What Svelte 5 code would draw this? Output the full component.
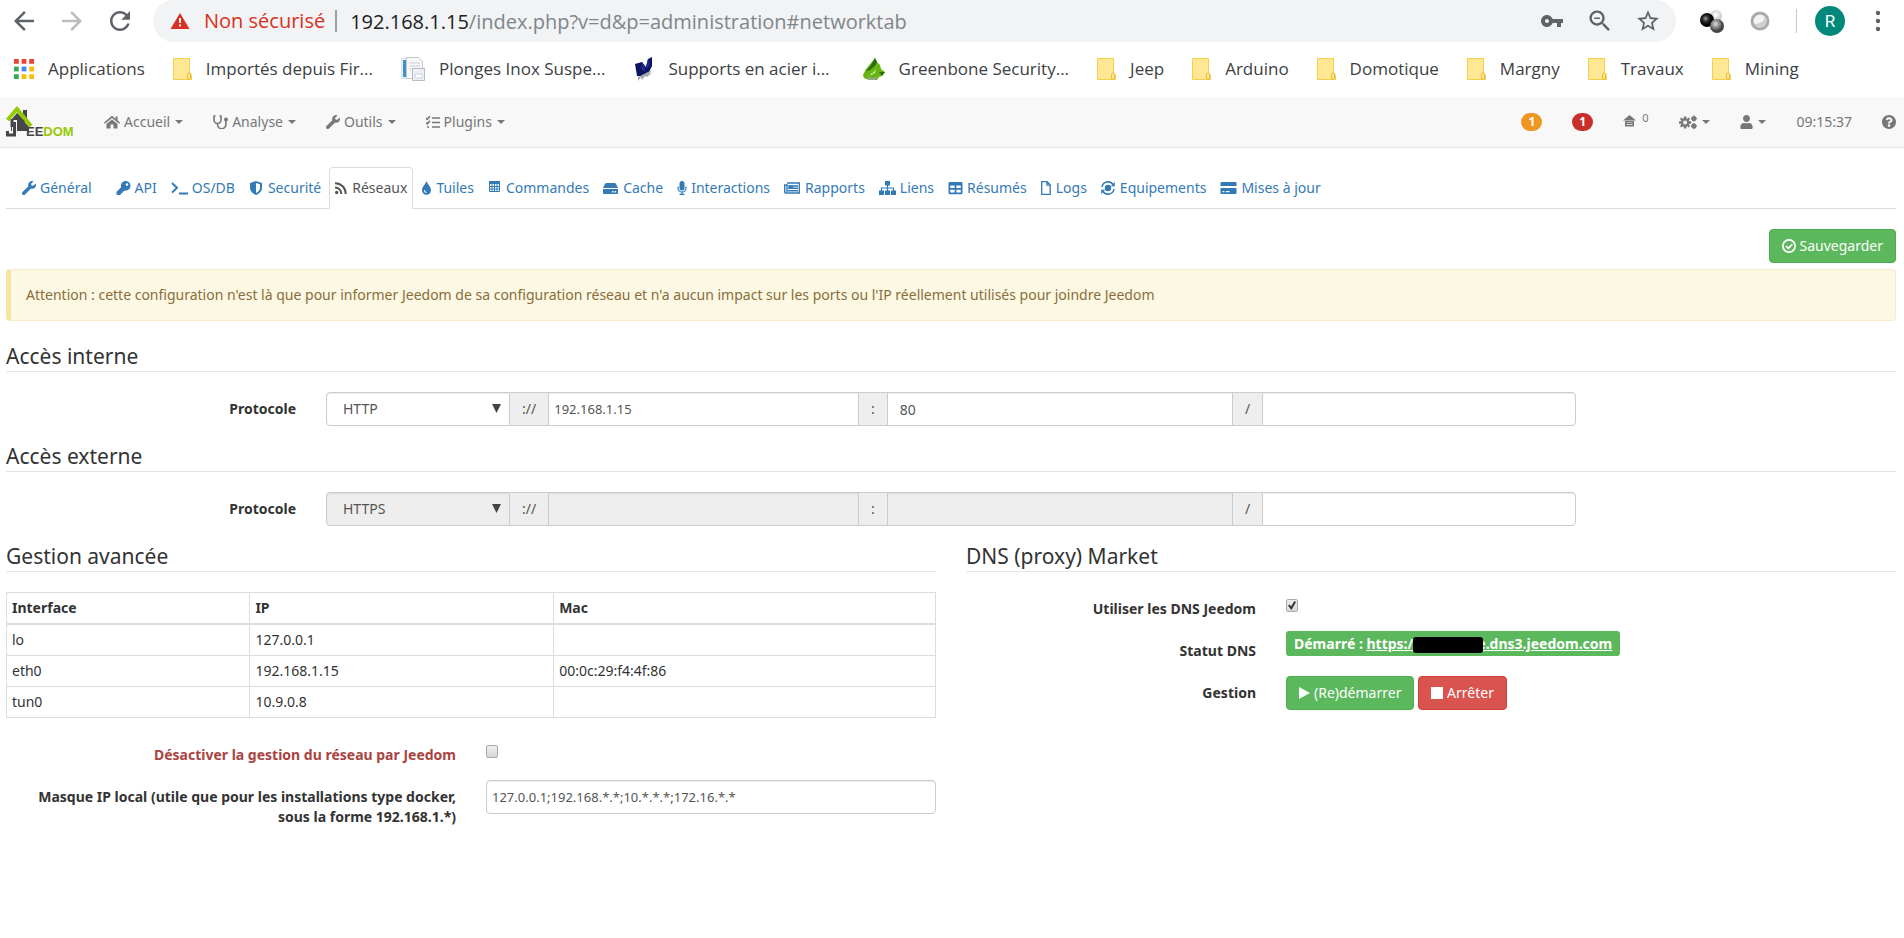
<script lang="ts">
  type Icon = { w: number; h?: number; box?: string; fill?: string; line?: string; sw?: number };

  const icons: Record<string, Icon> = {
    wrench: {
      w: 14,
      box: "0 0 512 512",
      fill: "M507.73 109.1c-2.24-9.03-13.54-12.09-20.12-5.51l-74.36 74.36-67.88-11.31-11.31-67.88 74.36-74.36c6.62-6.62 3.43-17.9-5.66-20.16-47.38-11.74-99.55.91-136.58 37.93-39.64 39.64-50.55 97.1-34.05 147.2L18.74 402.76c-24.99 24.99-24.99 65.51 0 90.5 24.99 24.99 65.51 24.99 90.5 0l213.21-213.21c50.12 16.71 107.47 5.68 147.37-34.22 37.07-37.07 49.7-89.32 37.91-136.73z"
    },
    key: {
      w: 15,
      box: "0 0 512 512",
      fill: "M512 176c0 97.2-78.8 176-176 176-11.2 0-22.2-1.1-32.8-3.1l-24 27A24 24 0 0 1 261.200 384H224v40c0 13.300-10.700 24-24 24h-40v40c0 13.300-10.700 24-24 24H24c-13.300 0-24-10.700-24-24v-78c0-6.400 2.500-12.500 7-17l161.800-161.800C163.100 213.800 160 195.300 160 176 160 78.800 238.800 0 336 0c97.500 0 176 78.500 176 176zM336 128c0 26.500 21.500 48 48 48s48-21.500 48-48-21.500-48-48-48-48 21.500-48 48z"
    },
    terminal: { w: 17, line: "M1 2l5 4.800L1 11.600M8 12.500h9", sw: 2 },
    shield: { w: 15, fill: "M7 0l6 2v5c0 3-2.500 5.500-6 7-3.500-1.500-6-4-6-7V2zM7 2v10c2.500-1.200 4-3 4-5V3.300z" },
    rss: { w: 13, fill: "M0 11.500a1.700 1.700 0 1 1 3.400 0 1.700 1.700 0 1 1-3.400 0z", line: "M0 2.200a10.500 10.500 0 0 1 10.700 10.800M0 6.400a6.300 6.300 0 0 1 6.300 6.600", sw: 2 },
    tint: { w: 11, fill: "M5.500 0c1 3 4.500 6 4.500 9.200a4.500 4.500 0 0 1-9 0C1 6 4.500 3 5.500 0zM3 9c0 1.800 1 2.900 2.500 3v-.900C4.500 11 4 10 4 9z" },
    calendar: { w: 14, fill: "M1 0h11v3H1z", line: "M1.500 3v7.500h10V3M1 5.500h11M1 8h11M4 3v7.500M6.500 3v7.500M9 3v7.500", sw: 1 },
    hdd: { w: 16, fill: "M3.500 2h8q1 0 1.500 1l2 4H0l2-4q.500-1 1.500-1zM0 8h15v4q0 1-1 1H1q-1 0-1-1zM9 10v1.400h1.500V10zM11.600 10v1.400h1.500V10z" },
    mic: { w: 10, fill: "M5 0a2.500 2.500 0 0 1 2.500 2.500V7a2.500 2.500 0 0 1-5 0V2.500A2.500 2.500 0 0 1 5 0z", line: "M1 5.500V7a4 4 0 0 0 8 0V5.500M5 11v2.500M2.500 13.400h5", sw: 1.200 },
    news: { w: 17, fill: "M5 4.500h4v3.500H5z", line: "M3 2h12.300v10H2Q.700 12 .700 10.700V4H3v7M4 5h10M4 7.300h10M4 9.800h10", sw: 1.400 },
    sitemap: { w: 17, fill: "M6 0h5v4.500H6zM0 9.500h5V14H0zM6 9.500h5V14H6zM12 9.500h5V14h-5z", line: "M8.500 4v6M2.500 10V7h12v3", sw: 1.200 },
    table: { w: 15, box: "0 0 512 512", fill: "M464 32H48C21.500 32 0 53.500 0 80v352c0 26.500 21.500 48 48 48h416c26.500 0 48-21.500 48-48V80c0-26.500-21.500-48-48-48zM224 416H64v-96h160v96zm0-160H64v-96h160v96zm224 160H288v-96h160v96zm0-160H288v-96h160v96z" },
    file: { w: 11, line: "M.700.700h5.500l3 3.200v9.400H.700zM6 .700v3.500h3.300", sw: 1.300 },
    sync: { w: 15, fill: "M3.800 7a3.200 3.200 0 1 1 6.400 0 3.200 3.200 0 1 1-6.400 0zM13.800 1v4.200H9.800zM.200 13V8.800h4z", line: "M1 6a6 6 0 0 1 11-2.300M13 8a6 6 0 0 1-11 2.300", sw: 1.500 },
    card: { w: 17, fill: "M1.500 1h14q1 0 1 1v3h-16V2q0-1 1-1zM.500 7h16v5q0 1-1 1h-14q-1 0-1-1zM2.500 10v1.300h2V10zM6 10v1.300h3.500V10z" },
    home: { w: 16, fill: "M8 .800L0 7.600l1 1.200 7-5.900 7 5.900 1-1.200-2.400-2V1.500h-2V4zM8 4.400L2.500 9v4.500h4v-4h3v4h4V9z" },
    steth: { w: 15, fill: "M11 4.500a2 2 0 1 1 4 0 2 2 0 1 1-4 0z", line: "M2.500 1H1v4a3.500 3.500 0 0 0 7 0V1H6.500M4.500 8.500v1a4.200 4.200 0 0 0 8.400 0V6", sw: 1.600 },
    tasks: { w: 14, line: "M0 3l1.300 1.300L4 1.300M0 7.500l1.300 1.300L4 5.900M1 12h2M6 3h8M6 7.500h8M6 12h8", sw: 1.600 },
    gears: { w: 18, line: "M9.300 7.500a3.200 3.200 0 1 1-6.400 0 3.200 3.200 0 1 1 6.400 0M16.300 3.500a1.400 1.400 0 1 1-2.800 0 1.400 1.400 0 1 1 2.800 0M16.300 11a1.400 1.400 0 1 1-2.800 0 1.400 1.400 0 1 1 2.800 0", fill: "M4.800 1.500h2.600v2.500H4.800zM4.800 11h2.600v2.500H4.800zM0 6.200h2.500v2.600H0zM9.700 6.200h2.500v2.600H9.700zM.900 4l1.600-1.600 2 2-1.600 1.600zM9.600 2.400L11.200 4l-2 2-1.600-1.600zM.900 11l2-2 1.600 1.600-2 2zM9.200 9l2 2-1.600 1.600-2-2zM14.300.500h1.200v1h-1.200zM14.300 5.500h1.200v1h-1.200zM12 3h1v1.200h-1zM17 3h1v1.200h-1zM14.300 8h1.200v1h-1.200zM14.300 13h1.200v1h-1.200zM12 10.400h1v1.200h-1zM17 10.400h1v1.200h-1z", sw: 2.300 },
    house: { w: 13, fill: "M6.500 0L13 5.500H0zM2 6h9v5.500H2zM3.500 7.500v.600h6v-.600zM3.500 9.300v.600h6v-.600z" },
    user: { w: 13, box: "0 0 448 512", fill: "M224 256c70.700 0 128-57.300 128-128S294.700 0 224 0 96 57.300 96 128s57.300 128 128 128zm89.600 32h-16.700c-22.200 10.200-46.900 16-72.900 16s-50.600-5.800-72.900-16h-16.700C60.200 288 0 348.200 0 422.400V464c0 26.500 21.500 48 48 48h352c26.500 0 48-21.500 48-48v-41.600c0-74.200-60.200-134.400-134.400-134.400z" },
    help: { w: 14, box: "8 8 496 496", fill: "M504 256c0 137-111 248-248 248S8 393 8 256C8 119.100 119 8 256 8s248 111.100 248 248zM262.700 90c-54.500 0-89.300 23-116.500 63.800-3.600 5.200-2.400 12.400 2.600 16.200l34.700 26.300c5.200 4 12.700 3 16.700-2.100 17.900-22.700 30.100-35.800 57.300-35.800 20.400 0 45.700 13.100 45.700 33 0 14.900-12.400 22.600-32.500 33.900C247.100 238.500 216 254.900 216 296v4c0 6.600 5.400 12 12 12h56c6.600 0 12-5.400 12-12v-1.300c0-28.500 83.200-29.700 83.200-106.700 0-58-60.200-102-116.500-102zM256 338a46 46 0 1 0 0 92 46 46 0 0 0 0-92z" },
    check: { w: 14, line: "M13.100 7A6.100 6.100 0 1 1 .900 7a6.100 6.100 0 1 1 12.200 0M4 7l2.300 2.400L10.300 5.300", sw: 1.800 },
    play: { w: 11, fill: "M0 1l11 6-11 6z" },
    stop: { w: 12, fill: "M0 1h12v12H0z" },
    back: { w: 30, h: 30, box: "0 0 24 24", fill: "M20 11H7.830l5.590-5.590L12 4l-8 8 8 8 1.410-1.410L7.830 13H20v-2z" },
    forward: { w: 30, h: 30, box: "0 0 24 24", fill: "M4 13h12.170l-5.590 5.590L12 20l8-8-8-8-1.410 1.410L16.170 11H4v2z" },
    reload: { w: 30, h: 30, box: "0 0 24 24", fill: "M17.650 6.350C16.200 4.900 14.210 4 12 4c-4.420 0-7.990 3.580-7.990 8s3.570 8 7.990 8c3.730 0 6.840-2.550 7.730-6h-2.080c-.82 2.330-3.040 4-5.650 4-3.310 0-6-2.690-6-6s2.690-6 6-6c1.660 0 3.140.69 4.220 1.780L13 11h7V4l-2.350 2.350z" },
    warn: { w: 20, h: 18, box: "0 0 20 18", fill: "M10 1l9.500 16H.500zM9 6v5h2V6zM9 12.500v2h2v-2z" },
    vpn: { w: 24, h: 24, box: "0 0 24 24", fill: "M12.650 10C11.830 7.670 9.610 6 7 6c-3.310 0-6 2.690-6 6s2.690 6 6 6c2.610 0 4.830-1.670 5.650-4H17v4h4v-4h2v-4H12.650zM7 14c-1.100 0-2-.9-2-2s.9-2 2-2 2 .9 2 2-.9 2-2 2z" },
    zoom: { w: 28, h: 28, box: "0 0 24 24", fill: "M15.500 14h-.79l-.28-.27C15.410 12.590 16 11.110 16 9.500 16 5.910 13.090 3 9.500 3S3 5.910 3 9.500 5.910 16 9.500 16c1.610 0 3.090-.59 4.230-1.570l.27.28v.79l5 4.990L20.490 19l-4.990-5zm-6 0C7.010 14 5 11.990 5 9.500S7.010 5 9.500 5 14 7.010 14 9.500 11.990 14 9.500 14zM7 9h5v1.300H7z" },
    star: { w: 26, h: 26, box: "0 0 24 24", fill: "M22 9.240l-7.190-.62L12 2 9.190 8.630 2 9.240l5.460 4.730L5.820 21 12 17.270 18.180 21l-1.630-7.030L22 9.240zM12 15.400l-3.760 2.270 1-4.280-3.320-2.880 4.380-.38L12 6.100l1.710 4.040 4.380.38-3.320 2.880 1 4.280L12 15.400z" },
    dots: { w: 6, h: 22, box: "0 0 6 22", fill: "M.800 3a2.200 2.200 0 1 1 4.400 0 2.200 2.200 0 1 1-4.400 0zM.800 11a2.200 2.200 0 1 1 4.400 0 2.200 2.200 0 1 1-4.400 0zM.800 19a2.200 2.200 0 1 1 4.400 0 2.200 2.200 0 1 1-4.400 0z" }
  };

  const bookmarks = [
    { icon: "apps", text: "Applications" },
    { icon: "folder", text: "Importés depuis Fir..." },
    { icon: "doc", text: "Plonges Inox Suspe..." },
    { icon: "steel", text: "Supports en acier i..." },
    { icon: "dragon", text: "Greenbone Security..." },
    { icon: "folder", text: "Jeep" },
    { icon: "folder", text: "Arduino" },
    { icon: "folder", text: "Domotique" },
    { icon: "folder", text: "Margny" },
    { icon: "folder", text: "Travaux" },
    { icon: "folder", text: "Mining" }
  ];

  const appColors = ["#ea4335", "#ea4335", "#ea4335", "#34a853", "#4285f4", "#fbbc05", "#34a853", "#fbbc05", "#fbbc05"];

  const menus = [
    { icon: "home", text: "Accueil" },
    { icon: "steth", text: "Analyse" },
    { icon: "wrench", text: "Outils" },
    { icon: "tasks", text: "Plugins" }
  ];

  const tabs = [
    { id: "general", icon: "wrench", text: "Général" },
    { id: "api", icon: "key", text: "API" },
    { id: "os", icon: "terminal", text: "OS/DB" },
    { id: "security", icon: "shield", text: "Securité" },
    { id: "network", icon: "rss", text: "Réseaux" },
    { id: "tiles", icon: "tint", text: "Tuiles" },
    { id: "commands", icon: "calendar", text: "Commandes" },
    { id: "cache", icon: "hdd", text: "Cache" },
    { id: "interact", icon: "mic", text: "Interactions" },
    { id: "report", icon: "news", text: "Rapports" },
    { id: "graph", icon: "sitemap", text: "Liens" },
    { id: "summary", icon: "table", text: "Résumés" },
    { id: "log", icon: "file", text: "Logs" },
    { id: "equipment", icon: "sync", text: "Equipements" },
    { id: "update", icon: "card", text: "Mises à jour" }
  ];

  let activeTab = $state("network");

  const access = $state([
    { id: "internal", title: "Accès interne", protocol: "HTTP", host: "192.168.1.15", port: "80", path: "", locked: false },
    { id: "external", title: "Accès externe", protocol: "HTTPS", host: "", port: "", path: "", locked: true }
  ]);

  const interfaces = [
    { name: "lo", ip: "127.0.0.1", mac: "" },
    { name: "eth0", ip: "192.168.1.15", mac: "00:0c:29:f4:4f:86" },
    { name: "tun0", ip: "10.9.0.8", mac: "" }
  ];

  let disableNetwork = $state(false);
  let useDns = $state(true);
  let mask = $state("127.0.0.1;192.168.*.*;10.*.*.*;172.16.*.*");
</script>

{#snippet icon(name: string)}
  {@const i = icons[name]}
  <svg class="icon" width={i.w} height={i.h ?? 14} viewBox={i.box ?? `0 0 ${i.w} 14`} aria-hidden="true">
    {#if i.fill}<path d={i.fill} fill="currentColor" fill-rule="evenodd" />{/if}
    {#if i.line}<path d={i.line} fill="none" stroke="currentColor" stroke-width={i.sw} />{/if}
  </svg>
{/snippet}

{#snippet favicon(name: string)}
  {#if name === "apps"}
    <svg class="icon" width="20" height="20" viewBox="0 0 21 21" aria-hidden="true">
      {#each appColors as color, n}
        <rect x={(n % 3) * 8} y={Math.floor(n / 3) * 8} width="5" height="5" fill={color} />
      {/each}
    </svg>
  {:else if name === "folder"}
    <svg class="icon" width="19" height="22" viewBox="0 0 19 22" aria-hidden="true">
      <path d="M.500.500h16v14.500q2 .500 2 2.500v4H.500z" fill="#ffe793" stroke="#f5cf4b" />
      <path d="M14.500 21v-4.500q0-1.500 1.500-1.500t1.500 1.500V21z" fill="#ffe793" stroke="#e8bf3c" />
    </svg>
  {:else if name === "doc"}
    <svg class="icon" width="24" height="24" viewBox="0 0 24 24" aria-hidden="true">
      <path d="M.500 1.500h7v20h-7z" fill="#eef3f8" stroke="#d5dde5" />
      <path d="M2 3h4v17H2z" fill="#3f8fc8" />
      <path d="M5.500.500h12l4 4v17h-16z" fill="#f8f8f8" stroke="#c4c7cc" />
      <path d="M8 6h11M8 9h11M8 12h11" stroke="#cbd0d6" />
      <path d="M11.500 11.500h12v12h-12z" fill="#eceff4" stroke="#b6bcc6" />
      <path d="M14 17h7v4h-7z" fill="#fff" stroke="#ccd1da" />
    </svg>
  {:else if name === "steel"}
    <svg class="icon" width="21" height="24" viewBox="-2 0 21 24" aria-hidden="true">
      <path d="M0 7l7-2 4 5 2-8 4-2v9l-3 6-8 4H2z" fill="#0c1460" />
      <path d="M7 5l3 5v5l-4-3zM13 2l2 5-3 5-1-2z" fill="#1d2c8c" />
      <path d="M3 20l14-7-3 4 4-2-6 5-2-1-3 4-1-3-3 4z" fill="#a4a4aa" />
    </svg>
  {:else}
    <svg class="icon" width="27" height="22" viewBox="-5 0 27 22" aria-hidden="true">
      <path d="M12 0l2 4 3 3 1 4 4 3-3 4-3 1-2 3H6l-5-2-1-3 3-6 5-6z" fill="#66b512" />
      <path d="M12 0l2 4-2 4-5 4-4 1 5-6zM22 14l-3 4-3-4z" fill="#2e6d0c" />
      <path d="M7 16l3-1 3-4-1 4-4 2z" fill="#d5efb0" />
      <path d="M4 18l5 2 5-1-2 3H6z" fill="#9aa38f" />
    </svg>
  {/if}
{/snippet}

<header class="browser">
  <div class="toolbar">
    <div class="history">
      <button aria-label="Précédent">{@render icon("back")}</button>
      <button class="off" aria-label="Suivant" disabled>{@render icon("forward")}</button>
      <button aria-label="Actualiser">{@render icon("reload")}</button>
    </div>
    <div class="omnibox">
      <span class="warn">{@render icon("warn")}</span>
      <span class="unsafe">Non sécurisé</span>
      <span class="url"><b>192.168.1.15</b>/index.php?v=d&amp;p=administration#networktab</span>
      <button aria-label="Mots de passe">{@render icon("vpn")}</button>
      <button aria-label="Zoom">{@render icon("zoom")}</button>
      <button aria-label="Favori">{@render icon("star")}</button>
    </div>
    <div class="extensions">
      <button aria-label="Extension">
        <svg width="26" height="26" viewBox="0 0 26 26">
          <defs>
            <radialGradient id="dark" cx=".4" cy=".4"><stop offset="0" stop-color="#999" /><stop offset=".5" stop-color="#222" /><stop offset="1" stop-color="#000" /></radialGradient>
            <radialGradient id="mid" cx=".4" cy=".35"><stop offset="0" stop-color="#ddd" /><stop offset="1" stop-color="#444" /></radialGradient>
            <radialGradient id="light" cx=".5" cy=".4"><stop offset="0" stop-color="#fff" /><stop offset="1" stop-color="#c8c8c8" /></radialGradient>
          </defs>
          <circle cx="17" cy="8" r="6" fill="url(#light)" />
          <circle cx="8" cy="12" r="7" fill="url(#dark)" />
          <circle cx="18" cy="18" r="7" fill="url(#mid)" />
        </svg>
      </button>
      <button aria-label="Extension">
        <svg width="22" height="22" viewBox="0 0 22 22">
          <circle cx="11" cy="11" r="8" fill="#f4f4f4" stroke="#aaa" stroke-width="3" />
          <path d="M5.500 14a6.500 6.500 0 0 0 10 1q3-4 0-8 0 7-10 7z" fill="#ccc" />
        </svg>
      </button>
      <span class="bar"></span>
      <button class="avatar">R</button>
      <button aria-label="Menu">{@render icon("dots")}</button>
    </div>
  </div>
  <nav class="bookmarks">
    {#each bookmarks as mark}
      <a href="#bookmark">{@render favicon(mark.icon)}{mark.text}</a>
    {/each}
  </nav>
</header>

<div class="app">
  <nav class="navbar">
    <a class="brand" href="#home" aria-label="Jeedom">
      <svg width="70" height="34" viewBox="0 0 70 34">
        <path d="M17 5h4v12h-4z" fill="#464648" />
        <path d="M5 15l6-7 6 6v12H5z" fill="#464648" />
        <path d="M11 8l12 14v4H11z" fill="#464648" />
        <path d="M6 28V15h5v13z" fill="#f8f8f8" />
        <path d="M8.500 17v13H1.500v-4M6 14v8" fill="none" stroke="#464648" stroke-width="3" />
        <path d="M1.500 15L11 4l14 17" fill="none" stroke="#94ca02" stroke-width="4" />
        <text x="20" y="31" class="logo-text"><tspan fill="#464648">EE</tspan><tspan fill="#94ca02">DOM</tspan></text>
      </svg>
    </a>
    {#each menus as menu}
      <button class="item">{@render icon(menu.icon)}{menu.text}<i class="caret"></i></button>
    {/each}
    <div class="right">
      <a class="item" href="#messages"><span class="badge orange">1</span></a>
      <a class="item" href="#updates"><span class="badge red">1</span></a>
      <a class="item" href="#summary">{@render icon("house")}<sup>0</sup></a>
      <button class="item" aria-label="Réglages">{@render icon("gears")}<i class="caret"></i></button>
      <button class="item" aria-label="Utilisateur">{@render icon("user")}<i class="caret"></i></button>
      <span class="item">09:15:37</span>
      <a class="item last" href="#help" aria-label="Aide">{@render icon("help")}</a>
    </div>
  </nav>

  <main>
    <div class="tabs" role="tablist">
      {#each tabs as tab, n}
        <button
          role="tab"
          class:first={n === 0}
          class:active={activeTab === tab.id}
          aria-selected={activeTab === tab.id}
          onclick={() => (activeTab = tab.id)}
        >
          {@render icon(tab.icon)}{tab.text}
        </button>
      {/each}
    </div>

    <div class="actions">
      <button class="btn success">{@render icon("check")}Sauvegarder</button>
    </div>

    <div class="alert">
      Attention : cette configuration n'est là que pour informer Jeedom de sa configuration réseau et n'a aucun impact sur les ports ou l'IP réellement utilisés pour joindre Jeedom
    </div>

    {#each access as row (row.id)}
      <h2>{row.title}</h2>
      <div class="form-row access">
        <label for="{row.id}-protocol">Protocole</label>
        <div class="input-group">
          <div class="select">
            <select id="{row.id}-protocol" bind:value={row.protocol} disabled={row.locked}>
              <option>HTTP</option>
              <option>HTTPS</option>
            </select>
            <svg width="9" height="9" viewBox="0 0 9 9" aria-hidden="true"><path d="M0 0h9L4.500 9z" fill="#444" /></svg>
          </div>
          <span class="addon">://</span>
          <input aria-label="Adresse" bind:value={row.host} disabled={row.locked} />
          <span class="addon">:</span>
          <input class="port" aria-label="Port" bind:value={row.port} disabled={row.locked} />
          <span class="addon">/</span>
          <input class="path" aria-label="Complément" bind:value={row.path} />
        </div>
      </div>
    {/each}

    <div class="columns">
      <section>
        <h2>Gestion avancée</h2>
        <table>
          <thead>
            <tr><th class="name">Interface</th><th class="ip">IP</th><th>Mac</th></tr>
          </thead>
          <tbody>
            {#each interfaces as item}
              <tr><td>{item.name}</td><td>{item.ip}</td><td>{item.mac}</td></tr>
            {/each}
          </tbody>
        </table>
        <div class="form-row half">
          <label class="danger-text" for="disable">Désactiver la gestion du réseau par Jeedom</label>
          <div class="field"><input id="disable" type="checkbox" bind:checked={disableNetwork} /></div>
        </div>
        <div class="form-row half">
          <label for="mask">Masque IP local (utile que pour les installations type docker, sous la forme 192.168.1.*)</label>
          <div class="field"><input id="mask" class="control" bind:value={mask} /></div>
        </div>
      </section>

      <section>
        <h2>DNS (proxy) Market</h2>
        <div class="form-row third">
          <label for="dns">Utiliser les DNS Jeedom</label>
          <div class="field"><input id="dns" type="checkbox" bind:checked={useDns} /></div>
        </div>
        <div class="form-row third">
          <span class="label">Statut DNS</span>
          <div class="field">
            <span class="status">Démarré : <a href="#dns">https:/<span class="masked"></span>e.dns3.jeedom.com</a></span>
          </div>
        </div>
        <div class="form-row third">
          <span class="label">Gestion</span>
          <div class="field">
            <button class="btn success">{@render icon("play")}(Re)démarrer</button>
            <button class="btn danger">{@render icon("stop")}Arrêter</button>
          </div>
        </div>
      </section>
    </div>
  </main>
</div>

<style>
  :global(body) {
    background: #fff;
    overflow-x: hidden;
  }

  * {
    box-sizing: border-box;
  }

  button {
    display: flex;
    align-items: center;
    justify-content: center;
    padding: 0;
    border: 0;
    background: none;
    color: inherit;
    font: inherit;
    cursor: pointer;
  }

  a {
    color: inherit;
    text-decoration: none;
  }

  .icon {
    flex: none;
  }

  /* browser bar */
  .browser {
    height: 97px;
    color: #5f6368;
    font-family: "Open Sans", "Noto Sans", sans-serif;
    white-space: nowrap;
  }

  .toolbar {
    display: flex;
    height: 42px;
  }

  .history {
    display: flex;
    gap: 18px;
    padding: 0 18px 0 9px;
  }

  .history .off {
    color: #babcbe;
    cursor: default;
  }

  .omnibox {
    display: flex;
    flex: 1;
    align-items: center;
    padding: 0 4px 0 17px;
    border-radius: 21px;
    background: #f1f3f4;
    font-size: 20px;
  }

  .omnibox button {
    width: 48px;
    height: 42px;
  }

  .warn {
    display: flex;
    margin-right: 14px;
    color: #d93025;
  }

  .unsafe {
    padding-right: 10px;
    border-right: 2px solid #9aa0a6;
    color: #d93025;
    line-height: 22px;
  }

  .url {
    flex: 1;
    padding-left: 13px;
    color: #80868b;
  }

  .url b {
    color: #202124;
    font-weight: 400;
  }

  .extensions {
    display: flex;
    align-items: center;
    padding: 0 2px 0 12px;
  }

  .extensions button {
    width: 48px;
    height: 42px;
  }

  .bar {
    width: 1px;
    height: 24px;
    margin: 0 18px 0 12px;
    background: #c8cacd;
  }

  .extensions .avatar {
    width: 30px;
    height: 30px;
    margin-right: 9px;
    border-radius: 15px;
    background: #00897b;
    color: #fff;
    font-family: Roboto, sans-serif;
    font-size: 17px;
  }

  .bookmarks {
    display: flex;
    gap: 28px;
    height: 53px;
    padding-left: 14px;
    color: #3c4043;
    font-size: 17px;
  }

  .bookmarks a {
    display: flex;
    gap: 14px;
    align-items: center;
  }

  /* application */
  .app {
    color: #333;
    font-family: "Noto Sans", "Open Sans", sans-serif;
    font-size: 14px;
    line-height: 20px;
  }

  .navbar {
    display: flex;
    height: 51px;
    border-bottom: 1px solid #e7e7e7;
    background: #f8f8f8;
    color: #777;
    white-space: nowrap;
  }

  .brand {
    display: flex;
    align-items: center;
    margin-right: 13px;
    padding-left: 6px;
  }

  .logo-text {
    font-family: "Liberation Sans", Arial, sans-serif;
    font-size: 13px;
    font-weight: 700;
  }

  .item {
    display: flex;
    gap: 4px;
    align-items: center;
    padding: 0 15px;
  }

  .right {
    display: flex;
    margin-left: auto;
  }

  .item.last {
    padding-right: 8px;
  }

  .item sup {
    padding: 0 1px 8px 2px;
    font-size: 11px;
  }

  .caret {
    margin-left: 1px;
    border-top: 4px solid;
    border-right: 4px solid transparent;
    border-left: 4px solid transparent;
  }

  .badge {
    padding: 0 7px;
    border-radius: 10px;
    color: #fff;
    font-size: 12px;
    font-weight: 700;
    line-height: 18px;
  }

  .orange {
    background: #ed9720;
  }

  .red {
    background: #c9302c;
  }

  main {
    padding: 0 8px 0 6px;
  }

  .tabs {
    display: flex;
    gap: 2px;
    margin-top: 19px;
    border-bottom: 1px solid #ddd;
    color: #337ab7;
    white-space: nowrap;
  }

  .tabs button {
    gap: 4px;
    margin-bottom: -1px;
    padding: 10px 5px;
    border: 1px solid transparent;
    border-radius: 4px 4px 0 0;
  }

  .tabs .first {
    padding: 10px 15px;
  }

  .tabs .active {
    border-color: #ddd #ddd #fff;
    background: #fff;
    color: #555;
  }

  .actions {
    display: flex;
    justify-content: flex-end;
    margin: 20px 0 6px;
  }

  .btn {
    display: inline-flex;
    gap: 4px;
    height: 34px;
    padding: 0 12px;
    border: 1px solid;
    border-radius: 4px;
    color: #fff;
  }

  .success {
    border-color: #4cae4c;
    background: #5cb85c;
  }

  .danger {
    border-color: #d43f3a;
    background: #d9534f;
  }

  .alert {
    margin-bottom: 20px;
    padding: 15px;
    border: 1px solid #faebcc;
    border-left: 5px solid #f4e5a5;
    border-radius: 4px;
    background: #fcf8e3;
    color: #8a6d3b;
  }

  h2 {
    margin: 0 0 20px;
    border-bottom: 1px solid #e5e5e5;
    font-size: 21px;
    font-weight: 400;
    line-height: 30px;
  }

  .form-row {
    display: grid;
    margin: 0 -15px 15px;
  }

  .access {
    grid-template-columns: 2fr 8fr 2fr;
  }

  .half {
    grid-template-columns: 1fr 1fr;
  }

  .third {
    grid-template-columns: 1fr 2fr;
  }

  .form-row label,
  .label {
    padding: 7px 15px 0;
    font-weight: 700;
    text-align: right;
  }

  .form-row .danger-text {
    color: #a94442;
  }

  .field {
    padding: 0 15px;
  }

  .input-group {
    display: grid;
    grid-template-columns: 183fr auto 309fr auto 344fr auto 312fr;
    height: 34px;
    margin: 0 15px;
  }

  .input-group input,
  .control,
  select {
    width: 100%;
    min-width: 0;
    height: 34px;
    padding: 0 5px;
    border: 1px solid #ccc;
    border-radius: 0;
    background: #fff;
    box-shadow: inset 0 1px 1px rgba(0, 0, 0, 0.08);
    color: #555;
    font: inherit;
    font-size: 13px;
  }

  .control {
    display: block;
    border-radius: 4px;
  }

  .select {
    position: relative;
    min-width: 0;
  }

  select {
    padding: 0 16px;
    border-radius: 4px 0 0 4px;
    appearance: none;
    font-size: 14px;
  }

  .select svg {
    position: absolute;
    top: 12px;
    right: 9px;
    pointer-events: none;
  }

  .input-group .port {
    padding: 0 12px;
    font-size: 14px;
  }

  .input-group .path {
    border-radius: 0 4px 4px 0;
  }

  .input-group input:disabled,
  select:disabled {
    background: #eee;
    opacity: 1;
  }

  .addon {
    padding: 0 12px;
    border: 1px solid #ccc;
    border-width: 1px 0;
    background: #eee;
    color: #555;
    line-height: 32px;
  }

  .columns {
    display: grid;
    grid-template-columns: 1fr 1fr;
    gap: 30px;
  }

  table {
    width: 100%;
    margin-bottom: 20px;
    border-collapse: collapse;
    table-layout: fixed;
  }

  th,
  td {
    height: 31px;
    padding: 5px;
    border: 1px solid #ddd;
    text-align: left;
  }

  th {
    border-bottom-width: 2px;
  }

  .name {
    width: 26.2%;
  }

  .ip {
    width: 32.7%;
  }

  [type="checkbox"] {
    display: block;
    width: 12px;
    height: 13px;
    margin: 7px 0 0;
    border: 1px solid #aaa;
    border-radius: 2px;
    background: linear-gradient(#eee, #d8d8d8);
    appearance: none;
  }

  [type="checkbox"]:checked::after {
    display: block;
    width: 8px;
    height: 9px;
    margin: 1px;
    background: #333;
    clip-path: polygon(0 50%, 20% 38%, 38% 62%, 80% 0, 100% 12%, 42% 100%);
    content: "";
  }

  .status {
    padding: 3px 8px;
    border-radius: 3px;
    background: #5cb85c;
    color: #fff;
    font-weight: 700;
  }

  .status a {
    text-decoration: underline;
  }

  .masked {
    display: inline-block;
    position: relative;
    width: 70px;
    height: 16px;
    margin-right: -6px;
    border-radius: 3px;
    background: #000;
    vertical-align: text-bottom;
  }
</style>
